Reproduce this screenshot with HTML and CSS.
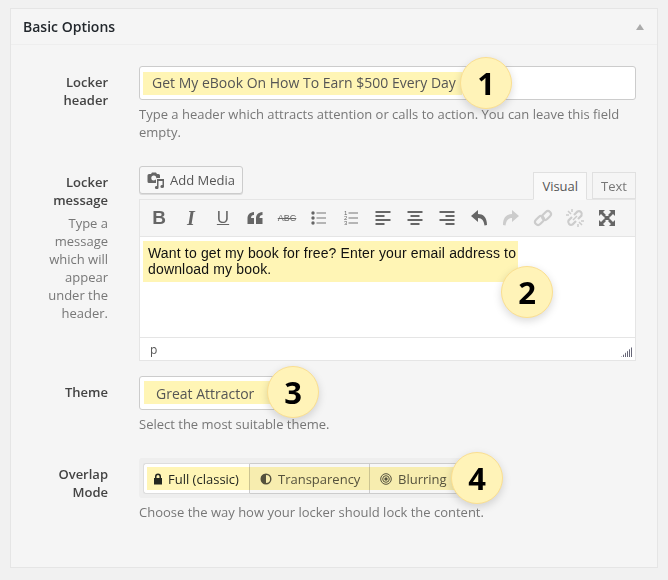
FILE: index.html
```html
<!DOCTYPE html>
<html lang="en">
<head>
    <meta charset="utf-8">
    <title>Basic Options</title>
    <link rel="stylesheet" href="styles.css">
</head>
<body>
<div class="panel">
    <div class="panel-head">
        <h2>Basic Options</h2>
        <span class="collapse"></span>
    </div>
    <div class="panel-body">
        <!-- locker header -->
        <div class="row">
            <div class="label"><strong>Locker<br>header</strong></div>
            <div class="field">
                <div class="input"><span class="mark mark-header">Get My eBook On How To Earn $500 Every Day</span></div>
                <p class="hint">Type a header which attracts attention or calls to action. You can leave this field empty.</p>
                <span class="num num-1">1</span>
            </div>
        </div>
        <!-- locker message -->
        <div class="row row-editor">
            <div class="label">
                <strong>Locker<br>message</strong>
                <p class="label-help">Type a<br>message<br>which will<br>appear<br>under the<br>header.</p>
            </div>
            <div class="field">
                <div class="editor-top">
                    <button class="add-media" type="button">
                        <svg width="18" height="18" viewBox="0 0 18 18"><path fill="#666" fill-rule="evenodd" d="M2 3h2l1-1.500h4L10 3h1.500A1.500 1.500 0 0 1 13 4.500V7H9v5H2A1.500 1.500 0 0 1 .5 10.500v-6A1.500 1.500 0 0 1 2 3zm4.800 1.500a2.500 2.500 0 1 0 0 5 2.500 2.500 0 0 0 0-5z"/><path fill="#666" d="M10 8h7v7.500a1.800 1.500 0 1 1-1.500-1.400V10h-4v6.500a1.800 1.500 0 1 1-1.500-1.400z"/></svg>
                        Add Media
                    </button>
                    <div class="tabs">
                        <span class="tab tab-active">Visual</span>
                        <span class="tab">Text</span>
                    </div>
                </div>
                <div class="editor">
                    <div class="toolbar">
                        <span class="tool tool-b">B</span>
                        <span class="tool tool-i">I</span>
                        <span class="tool tool-u">U</span>
                        <span class="tool"><svg width="20" height="20" viewBox="0 0 20 20"><path fill="#666" d="M9 4v3C6.800 7 6.200 8.300 6 10h3v6H2.500v-5.500C2.500 7 4.500 4.300 9 4zM17.500 4v3c-2.200 0-2.800 1.300-3 3h3v6H11v-5.500C11 7 13 4.300 17.500 4z"/></svg></span>
                        <span class="tool tool-abc">ABC</span>
                        <span class="tool"><svg width="20" height="20" viewBox="0 0 20 20"><g fill="#666"><circle cx="4" cy="5" r="1.700"/><circle cx="4" cy="10" r="1.700"/><circle cx="4" cy="15" r="1.700"/></g><path stroke="#777" stroke-width="1.200" d="M7.500 5H17M7.500 10H17M7.500 15H17"/></svg></span>
                        <span class="tool"><svg width="20" height="20" viewBox="0 0 20 20"><path stroke="#777" stroke-width="1.200" d="M7.500 5H17M7.500 10H17M7.500 15H17"/><g class="tool-nums"><text x="3" y="7">1</text><text x="3" y="12">2</text><text x="3" y="17">3</text></g></svg></span>
                        <span class="tool"><svg width="20" height="20" viewBox="0 0 20 20"><path stroke="#666" stroke-width="2" d="M2.500 4h15M2.500 8h9M2.500 12h15M2.500 16h9"/></svg></span>
                        <span class="tool"><svg width="20" height="20" viewBox="0 0 20 20"><path stroke="#666" stroke-width="2" d="M2.500 4h15M5.500 8h9M2.500 12h15M5.500 16h9"/></svg></span>
                        <span class="tool"><svg width="20" height="20" viewBox="0 0 20 20"><path stroke="#666" stroke-width="2" d="M2.500 4h15M8.500 8h9M2.500 12h15M8.500 16h9"/></svg></span>
                        <span class="tool"><svg width="20" height="20" viewBox="0 0 20 20"><path fill="#666" d="M9 2v4c5 0 9 3 9 11l-2.500.5C15 13 13 10 9 10v4L2 8z"/></svg></span>
                        <span class="tool"><svg width="20" height="20" viewBox="0 0 20 20"><path fill="#ccc" d="M11 2v4C6 6 2 9 2 17l2.500.5C5 13 7 10 11 10v4l7-6z"/></svg></span>
                        <span class="tool"><svg width="20" height="20" viewBox="0 0 20 20"><g fill="none" stroke="#ccc" stroke-width="2.200"><rect x="1.500" y="9.500" width="10" height="6" rx="3" transform="rotate(-45 6.500 12.500)"/><rect x="8.500" y="4.500" width="10" height="6" rx="3" transform="rotate(-45 13.500 7.500)"/></g></svg></span>
                        <span class="tool"><svg width="20" height="20" viewBox="0 0 20 20"><g fill="none" stroke="#ccc" stroke-width="2.200"><path d="M7 9l-3.500 3.500a3 3 0 0 0 4 4L11 13"/><path d="M13 11l3.500-3.500a3 3 0 0 0-4-4L9 7"/></g><path stroke="#ccc" stroke-width="1.500" d="M3 3l3 3M7 1v3M1 7h3M17 17l-3-3M13 19v-3M19 13h-3M12 8l-4 4"/></svg></span>
                        <span class="tool"><svg width="20" height="20" viewBox="0 0 20 20"><path fill="#666" d="M2 2h6L6 4l3 3-2 2-3-3-2 2zM18 2v6l-2-2-3 3-2-2 3-3-2-2zM2 18v-6l2 2 3-3 2 2-3 3 2 2zM18 18h-6l2-2-3-3 2-2 3 3 2-2zM7.500 8h5v4h-5z"/></svg></span>
                    </div>
                    <div class="editor-content">
                        <div class="mark mark-message">Want to get my book for free? Enter your email address to download my book.</div>
                    </div>
                    <div class="statusbar">
                        p
                        <span class="resize"></span>
                    </div>
                </div>
                <span class="num num-2">2</span>
            </div>
        </div>
        <!-- theme -->
        <div class="row">
            <div class="label"><strong>Theme</strong></div>
            <div class="field">
                <div class="input input-select"><span class="mark mark-theme">Great Attractor</span></div>
                <p class="hint">Select the most suitable theme.</p>
                <span class="num num-3">3</span>
            </div>
        </div>
        <!-- overlap mode -->
        <div class="row">
            <div class="label"><strong>Overlap<br>Mode</strong></div>
            <div class="field">
                <div class="mode-wrap">
                    <div class="mode-group">
                        <span class="mode mode-active">
                            <svg width="12" height="12" viewBox="0 0 12 12"><path fill="#23282d" d="M2 5h1V3.500a3 3 0 0 1 6 0V5h1v6.500H2zM4.500 5h3V3.500a1.500 1.500 0 0 0-3 0z"/></svg>
                            Full (classic)
                        </span>
                        <span class="mode">
                            <svg width="12" height="12" viewBox="0 0 12 12"><circle cx="6" cy="6" r="4.800" fill="none" stroke="#555" stroke-width="1.400"/><path fill="#555" d="M6 1a5 5 0 0 0 0 10z"/></svg>
                            Transparency
                        </span>
                        <span class="mode mode-last">
                            <svg width="12" height="12" viewBox="0 0 12 12"><g fill="none" stroke="#555"><circle cx="6" cy="6" r="5.300"/><circle cx="6" cy="6" r="3.300"/></g><circle cx="6" cy="6" r="1.700" fill="#555"/></svg>
                            Blurring
                        </span>
                    </div>
                    <span class="mode-mark"></span>
                </div>
                <p class="hint">Choose the way how your locker should lock the content.</p>
                <span class="num num-4">4</span>
            </div>
        </div>
    </div>
</div>
</body>
</html>
```

FILE: styles.css
```css
*{margin: 0;padding: 0;box-sizing: border-box;}
body{background: #f1f1f1;font-family: "Open Sans", sans-serif;font-size: 13px;line-height: 18px;color: #555;}

/* panel */
.panel{width: 648px;height: 560px;margin: 8px 0 0 10px;background: #f5f5f5;border: 1px solid #e5e5e5;}
.panel-head{height: 36px;display: flex;align-items: center;justify-content: space-between;padding: 0 13px 0 12px;border-bottom: 1px solid #eee;}
.panel-head h2{font-size: 14px;font-weight: 600;color: #23282d;}
.collapse{width: 0;height: 0;border-left: 4px solid transparent;border-right: 4px solid transparent;border-bottom: 6px solid #aaa;}
.panel-body{padding: 21px 21px 0 0;}

/* rows */
.row{display: grid;grid-template-columns: 97px 497px;column-gap: 31px;padding-bottom: 25px;}
.row-editor{padding-bottom: 15px;}
.label{padding-top: 7px;text-align: right;}
.label strong{font-weight: 600;color: #444;}
.label-help{margin-top: 5px;color: #777;}
.field{position: relative;}
.hint{margin-top: 5px;color: #777;}

/* inputs */
.input{height: 34px;padding: 5px 3px;background: #fff;border: 1px solid #ccc;border-radius: 3px;font-size: 14px;line-height: 22px;}
.input-select{width: 152px;padding: 4px 4px;}
.mark{background: #fff5b5;}
.mark-header{display: block;width: 319px;height: 23px;padding-left: 9px;}
.mark-theme{display: block;width: 135px;height: 23px;padding: 2px 0 0 12px;}

/* editor */
.editor-top{height: 33px;display: flex;justify-content: space-between;align-items: flex-start;}
.add-media{height: 28px;width: 104px;display: flex;align-items: center;gap: 5px;padding-left: 7px;background: #f7f7f7;border: 1px solid #ccc;border-radius: 3px;box-shadow: 0 1px 0 #ddd;font: 13px "Open Sans", sans-serif;color: #555;}
.tabs{display: flex;gap: 5px;padding-top: 6px;}
.tab{height: 27px;padding: 4px 8px 0;background: #f5f5f5;border: 1px solid #e0e0e0;color: #777;}
.tab-active{height: 28px;background: #f9f9f9;border-bottom-color: #f9f9f9;color: #555;position: relative;z-index: 1;}
.editor{border: 1px solid #e5e5e5;margin-top: 0;}
.toolbar{height: 37px;display: flex;align-items: center;padding-left: 3px;background: #f5f5f5;border-bottom: 1px solid #e5e5e5;}
.tool{width: 32px;height: 20px;display: flex;justify-content: center;align-items: center;font-family: "Liberation Serif", serif;font-size: 20px;font-weight: 700;color: #666;}
.tool-b{font-family: "Liberation Sans", sans-serif;font-size: 19px;}
.tool-i{font-family: "Liberation Serif", serif;font-style: italic;}
.tool-u{font-family: "Liberation Sans", sans-serif;font-size: 17px;font-weight: 400;text-decoration: underline;}
.tool-abc{font-family: "Liberation Sans", sans-serif;font-size: 9px;font-weight: 400;text-decoration: line-through;}
.tool-nums{font-family: "Liberation Sans", sans-serif;font-size: 6px;font-weight: 400;fill: #666;}
.editor-content{height: 100px;padding: 4px 3px;background: #fff;}
.mark-message{width: 375px;height: 41px;padding: 4px 0 4px 5px;font-family: "Liberation Sans", sans-serif;font-size: 14px;line-height: 16px;letter-spacing: .16px;color: #111;}
.statusbar{height: 23px;padding: 3px 10px;position: relative;background: #fff;border-top: 1px solid #e5e5e5;font-size: 12px;color: #555;}
.resize{position: absolute;right: 3px;bottom: 3px;width: 11px;height: 10px;background: repeating-linear-gradient(90deg, #667 0 1px, transparent 1px 2px);clip-path: polygon(100% 0, 100% 100%, 0 100%);}

/* overlap mode buttons */
.mode-wrap{position: relative;width: 326px;height: 40px;padding: 5px 4px;background: #eee;border-radius: 3px;}
.mode-group{display: flex;height: 31px;}
.mode{display: flex;flex: none;align-items: center;gap: 6px;width: 120px;padding-left: 10px;background: #f7f7f7;border: 1px solid #ccc;border-left: 0;color: #555;}
.mode svg{flex: none;}
.mode-active{width: 107px;gap: 4px;padding-left: 8px;background: #fff;border: 1px solid #ddd;border-right-color: #ccc;border-radius: 3px 0 0 3px;color: #23282d;}
.mode-last{width: 91px;border-radius: 0 3px 3px 0;}
.mode-mark{position: absolute;left: 8px;top: 9px;width: 312px;height: 23px;background: #fff5b5;mix-blend-mode: multiply;}

/* numbered callouts */
.num{position: absolute;width: 52px;height: 52px;display: flex;align-items: center;justify-content: center;background: #fff3b8;border: 1px solid #fbdf90;border-radius: 50%;box-shadow: 0 3px 8px rgba(0,0,0,.15);font-size: 31px;font-weight: 700;line-height: 1;color: #000;}
.num-1{left: 321px;top: -9px;}
.num-2{left: 362px;top: 100px;}
.num-3{left: 128px;top: -10px;}
.num-4{left: 312px;top: -6px;}
```
